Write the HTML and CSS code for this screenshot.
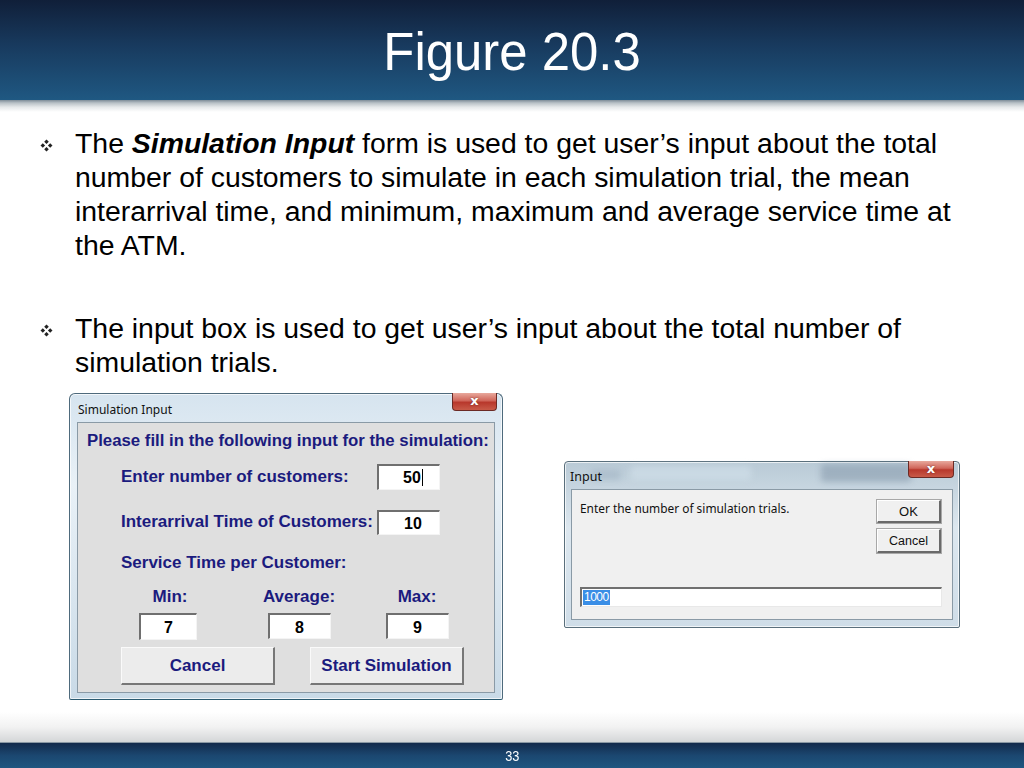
FILE: index.html
```html
<!DOCTYPE html>
<html>
<head>
<meta charset="utf-8">
<link rel="stylesheet" href="styles.css">
</head>
<body>
<div class="slide">
  <div class="header"><h1 class="title">Figure 20.3</h1></div>
  <div class="header-shadow"></div>
  <div class="main">
    <div class="point first">
      <span class="bullet"><svg width="13" height="13" viewBox="0 0 13 13"><path d="M6.5 0.5 L8.8 2.8 L6.5 5.1 L4.2 2.8 Z M6.5 7.9 L8.8 10.2 L6.5 12.5 L4.2 10.2 Z M2.8 4.2 L5.1 6.5 L2.8 8.8 L0.5 6.5 Z M10.2 4.2 L12.5 6.5 L10.2 8.8 L7.9 6.5 Z" fill="#222"/></svg></span>
      <p class="point-text">The <b><i>Simulation Input</i></b> form is used to get user’s input about the total number of customers to simulate in each simulation trial, the mean interarrival time, and minimum, maximum and average service time at the ATM.</p>
    </div>
    <div class="point second">
      <span class="bullet"><svg width="13" height="13" viewBox="0 0 13 13"><path d="M6.5 0.5 L8.8 2.8 L6.5 5.1 L4.2 2.8 Z M6.5 7.9 L8.8 10.2 L6.5 12.5 L4.2 10.2 Z M2.8 4.2 L5.1 6.5 L2.8 8.8 L0.5 6.5 Z M10.2 4.2 L12.5 6.5 L10.2 8.8 L7.9 6.5 Z" fill="#222"/></svg></span>
      <p class="point-text">The input box is used to get user’s input about the total number of simulation trials.</p>
    </div>
    <div class="figures">
      <div class="win win-sim">
        <div class="titlebar">
          <span class="wtitle">Simulation Input</span>
          <span class="close">x</span>
        </div>
        <div class="client sim-client">
          <div class="sim-heading">Please fill in the following input for the simulation:</div>
          <div class="sim-row row1">
            <span class="sim-label">Enter number of customers:</span>
            <span class="field f-main f-50">50<span class="caret"></span></span>
          </div>
          <div class="sim-row row2">
            <span class="sim-label">Interarrival Time of Customers:</span>
            <span class="field f-main f-10">10</span>
          </div>
          <div class="sim-sub">Service Time per Customer:</div>
          <div class="trio">
            <div class="col c1"><span class="col-label">Min:</span><span class="field f-small">7</span></div>
            <div class="col c2"><span class="col-label">Average:</span><span class="field f-small f-wide">8</span></div>
            <div class="col c3"><span class="col-label">Max:</span><span class="field f-small f-wide">9</span></div>
          </div>
          <div class="sim-buttons">
            <span class="sim-btn">Cancel</span>
            <span class="sim-btn">Start Simulation</span>
          </div>
        </div>
      </div>
      <div class="win win-input">
        <div class="titlebar tb2">
          <span class="blur b1"></span><span class="blur b2"></span><span class="blur b3"></span>
          <span class="wtitle t2">Input</span>
          <span class="close c2x">x</span>
        </div>
        <div class="client in-client">
          <div class="in-top">
            <span class="prompt">Enter the number of simulation trials.</span>
            <div class="in-buttons">
              <span class="in-btn">OK</span>
              <span class="in-btn cancel">Cancel</span>
            </div>
          </div>
          <div class="in-field"><span class="sel">1000</span></div>
        </div>
      </div>
    </div>
  </div>
  <div class="footer-fade"></div>
  <div class="footer"><span class="page">33</span></div>
</div>
</body>
</html>
```

FILE: styles.css
```css
html, body {
  margin: 0;
  padding: 0;
  background: #fff;
}
.slide {
  width: 1024px;
  height: 768px;
  display: flex;
  flex-direction: column;
  overflow: hidden;
  font-family: "Liberation Sans", Arial, sans-serif;
}
.header {
  height: 100px;
  background: linear-gradient(to bottom, #101f39 0%, #183a5e 45%, #1f5882 100%);
  display: flex;
  align-items: center;
  justify-content: center;
}
.title {
  margin: 0;
  color: #fff;
  font-weight: normal;
  font-size: 53px;
  line-height: 1;
  transform: scaleX(0.96);
  position: relative;
  top: 1px;
}
.header-shadow {
  height: 12px;
  background: linear-gradient(to bottom, #7d8c98 0%, #b9c1c7 25%, #e6e9eb 60%, #ffffff 100%);
}
.main {
  flex: 1;
  padding-top: 14px;
}
.point {
  display: flex;
  align-items: flex-start;
}
.point.second {
  margin-top: 49px;
}
.bullet {
  width: 35px;
  margin-left: 40px;
  height: 34px;
  display: flex;
  align-items: center;
  padding-top: 4px;
  box-sizing: border-box;
  flex: none;
}
.point-text {
  margin: 0;
  width: 888px;
  font-size: 28.4px;
  line-height: 34px;
  color: #000;
}
.figures {
  display: flex;
  align-items: flex-start;
  margin-top: 14px;
  padding-left: 69px;
}
.win {
  border: 1px solid #4e6a7c;
  border-radius: 6px 6px 2px 2px;
  background: linear-gradient(to bottom, #d6e4ef 0%, #e9f1f7 30%, #c9dae7 100%);
  box-shadow: inset 0 0 0 1px rgba(255,255,255,0.7);
}
.win-sim {
  width: 434px;
  height: 307px;
  padding: 0 7px 7px 7px;
  box-sizing: border-box;
  border-bottom-color: #2a5a70;
}
.titlebar {
  height: 28px;
  position: relative;
  display: flex;
  align-items: center;
}
.wtitle {
  font-family: "Noto Sans", "Open Sans", sans-serif;
  font-size: 12px;
  color: #111;
  padding-left: 1px;
  position: relative;
  top: 1px;
}
.close {
  position: absolute;
  right: -2px;
  top: -1px;
  width: 45px;
  height: 18px;
  border: 1px solid #6b2a24;
  border-top: none;
  border-radius: 0 0 4px 4px;
  background: linear-gradient(to bottom, #e8a89c 0%, #d0665a 45%, #b8382c 55%, #c85a48 100%);
  color: #fff;
  font-family: "DejaVu Sans", sans-serif;
  font-weight: bold;
  font-size: 13px;
  line-height: 15px;
  text-align: center;
  box-sizing: border-box;
  text-shadow: 0 0 2px #6b2a24;
}
.client {
  border: 1px solid #8a9aa6;
}
.sim-client {
  background: #dfdfdf;
  height: 271px;
  box-sizing: border-box;
  padding: 8px 0 0 9px;
  color: #1b1b7e;
  font-weight: bold;
  font-size: 17px;
}
.sim-heading {
  line-height: 20px;
  font-size: 16.8px;
}
.sim-row {
  display: flex;
  align-items: center;
  padding-left: 34px;
  height: 26px;
}
.row1 { margin-top: 13px; }
.row2 { margin-top: 19px; }
.sim-label {
  width: 256px;
  flex: none;
}
.field {
  background: #fff;
  border-top: 2px solid #6f6f6f;
  border-left: 2px solid #6f6f6f;
  border-right: 1px solid #f4f4f4;
  border-bottom: 1px solid #f4f4f4;
  color: #000;
  box-sizing: border-box;
  text-align: center;
  display: block;
}
.f-main {
  width: 63px;
  height: 26px;
  line-height: 24px;
  font-size: 16px;
}
.f-50 { padding-left: 8px; }
.f-10 { padding-left: 8px; height: 25px; }
.caret {
  display: inline-block;
  width: 1px;
  height: 17px;
  background: #000;
  vertical-align: -3px;
  margin-left: 1px;
}
.sim-sub {
  margin-top: 18px;
  padding-left: 34px;
  line-height: 20px;
}
.trio {
  display: flex;
  margin-top: 14px;
}
.col {
  width: 90px;
  display: flex;
  flex-direction: column;
  align-items: center;
  flex: none;
}
.c1 { margin-left: 38px; }
.c2 { margin-left: 39px; }
.c3 { margin-left: 28px; }
.col-label {
  line-height: 20px;
  font-size: 17px;
}
.f-small {
  margin-top: 6px;
  width: 58px;
  height: 27px;
  line-height: 25px;
  font-size: 16px;
}
.f-wide { width: 63px; height: 26px; }
.c1 .f-small { margin-right: 4px; }
.sim-buttons {
  display: flex;
  margin-top: 7px;
  padding-left: 34px;
  gap: 35px;
}
.sim-btn {
  width: 154px;
  height: 38px;
  box-sizing: border-box;
  background: #ececec;
  border-top: 1px solid #fafafa;
  border-left: 1px solid #fafafa;
  border-right: 2px solid #777;
  border-bottom: 2px solid #777;
  display: flex;
  align-items: center;
  justify-content: center;
  font-size: 17px;
}
.win-input {
  margin-left: 61px;
  margin-top: 68px;
  width: 396px;
  height: 167px;
  box-sizing: border-box;
  padding: 0 6px 7px 6px;
  background: linear-gradient(to bottom, #b9cad6 0%, #dce7ef 40%, #cfdde8 100%);
  border-color: #5a6f7c;
  border-radius: 4px 4px 2px 2px;
}
.tb2 {
  height: 27px;
}
.blur {
  position: absolute;
  filter: blur(3px);
  border-radius: 3px;
}
.b1 { left: 250px; top: 2px; width: 90px; height: 18px; background: rgba(120,140,160,0.45); }
.b2 { left: 60px; top: 4px; width: 120px; height: 14px; background: rgba(210,225,235,0.6); }
.b3 { left: 20px; top: 8px; width: 30px; height: 10px; background: rgba(140,160,180,0.35); }
.t2 {
  font-size: 12.5px;
  padding-left: 0;
  left: -1px;
}
.c2x {
  right: -1px;
  width: 46px;
  height: 17px;
  line-height: 15px;
}
.in-client {
  background: #f0f0f0;
  height: 131px;
  box-sizing: border-box;
  padding: 10px 11px 0 8px;
  font-family: "Noto Sans", "Open Sans", sans-serif;
  font-size: 11.9px;
  color: #111;
}
.in-top {
  display: flex;
  justify-content: space-between;
  align-items: flex-start;
}
.prompt {
  line-height: 16px;
  padding-top: 0;
}
.in-buttons {
  display: flex;
  flex-direction: column;
  gap: 6px;
}
.in-btn {
  width: 64px;
  height: 23px;
  box-sizing: border-box;
  background: #f0f0f0;
  border-top: 1px solid #ffffff;
  border-left: 1px solid #ffffff;
  border-right: 2px solid #6a6a6a;
  border-bottom: 2px solid #6a6a6a;
  outline: 1px solid #a8a8a8;
  display: flex;
  align-items: center;
  justify-content: center;
  font-family: "Liberation Sans", Arial, sans-serif;
  font-size: 13px;
}
.in-btn.cancel { height: 24px; font-size: 12.5px; }
.in-field {
  margin-top: 34px;
  width: 362px;
  height: 20px;
  box-sizing: border-box;
  background: #fff;
  border-top: 2px solid #707070;
  border-left: 2px solid #707070;
  border-right: 1px solid #e8e8e8;
  border-bottom: 1px solid #e8e8e8;
  padding-left: 1px;
  display: flex;
  align-items: center;
}
.sel {
  background: #3a8ee6;
  color: #fff;
  font-family: "Liberation Sans", Arial, sans-serif;
  font-size: 12px;
  line-height: 15px;
  letter-spacing: -0.5px;
  padding: 0 1px;
}
.footer-fade {
  height: 30px;
  background: linear-gradient(to bottom, #ffffff 0%, #f2f2f2 50%, #d4d6d8 100%);
  border-bottom: 1px solid #8a98a4;
}
.footer {
  height: 25px;
  background: linear-gradient(to bottom, #132a4c 0%, #1b4770 50%, #1f5680 100%);
  display: flex;
  align-items: center;
  justify-content: center;
}
.page {
  color: #fff;
  font-size: 15px;
  transform: scaleX(0.85);
}
```
